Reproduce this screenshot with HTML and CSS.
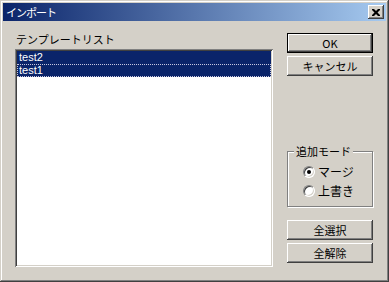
FILE: index.html
```html
<!DOCTYPE html>
<html lang="ja">
<head>
    <meta charset="UTF-8">
    <title>インポート</title>
    <link rel="stylesheet" href="styles.css">
</head>
<body>
    <div class="window">
        <div class="titlebar">
            <span class="title">インポート</span>
            <button class="close-btn" type="button">
                <svg width="8" height="7" viewBox="0 0 8 7">
                    <path d="M0 0h2l2 2 2-2h2v1l-2.5 2.5 2.5 2.5v1h-2l-2-2-2 2h-2v-1l2.5-2.5-2.5-2.5z" fill="#000"/>
                </svg>
            </button>
        </div>
        <div class="content">
            <div class="left">
                <div class="list-label">テンプレートリスト</div>
                <div class="listbox">
                    <div class="item selected">test2</div>
                    <div class="item selected focused">test1</div>
                </div>
            </div>
            <div class="right">
                <button class="btn default" type="button">OK</button>
                <button class="btn" type="button">キャンセル</button>

                <div class="group">
                    <span class="group-title">追加モード</span>
                    <label class="radio">
                        <span class="radio-mark checked"></span>マージ
                    </label>
                    <label class="radio">
                        <span class="radio-mark"></span>上書き
                    </label>
                </div>

                <button class="btn select-all" type="button">全選択</button>
                <button class="btn" type="button">全解除</button>
            </div>
        </div>
    </div>
</body>
</html>
```

FILE: styles.css
```css
body {
    margin: 0;
    padding: 0;
    background-color: #d4d0c8;
    font-family: "Noto Sans CJK JP", "Liberation Sans", sans-serif;
    font-size: 12px;
}

.window {
    width: 389px;
    height: 282px;
    box-sizing: border-box;
    padding: 3px;
    background-color: #d4d0c8;
    box-shadow: inset -1px -1px #404040, inset 1px 1px #d4d0c8,
        inset -2px -2px #808080, inset 2px 2px #fff;
}

.titlebar {
    height: 18px;
    display: flex;
    align-items: center;
    justify-content: space-between;
    padding: 0 2px 0 3px;
    background: linear-gradient(to right, #0a246a, #a6caf0);
    color: #fff;
}

.title {
    font-size: 11px;
    letter-spacing: -1px;
    line-height: 18px;
}

.close-btn {
    width: 16px;
    height: 14px;
    padding: 0;
    border: none;
    display: flex;
    align-items: center;
    justify-content: center;
    background-color: #d4d0c8;
    box-shadow: inset -1px -1px #404040, inset 1px 1px #fff,
        inset -2px -2px #808080;
}

.content {
    display: flex;
    padding: 10px 12px 0 12px;
}

.left {
    width: 258px;
}

.list-label {
    height: 16px;
    line-height: 16px;
    padding-left: 1px;
    font-size: 11px;
    color: #000;
}

.listbox {
    margin-top: 2px;
    height: 218px;
    box-sizing: border-box;
    padding: 2px;
    background-color: #fff;
    box-shadow: inset 1px 1px #808080, inset -1px -1px #fff,
        inset 2px 2px #404040, inset -2px -2px #d4d0c8;
}

.item {
    height: 13px;
    line-height: 13px;
    padding-left: 2px;
    font-family: "Liberation Sans", sans-serif;
    font-size: 11px;
    color: #000;
}

.item.selected {
    background-color: #0a246a;
    color: #fff;
}

.item.focused {
    box-sizing: border-box;
    border: 1px dotted #c8c8e0;
    padding-left: 1px;
    line-height: 11px;
}

.right {
    margin-left: 14px;
    width: 86px;
    padding-top: 2px;
    display: flex;
    flex-direction: column;
}

.btn {
    height: 20px;
    width: 86px;
    padding: 0;
    border: none;
    background-color: #d4d0c8;
    font-family: "Noto Sans CJK JP", sans-serif;
    font-size: 11px;
    color: #000;
    box-shadow: inset -1px -1px #404040, inset 1px 1px #fff,
        inset -2px -2px #808080;
}

.btn + .btn {
    margin-top: 3px;
}

.btn.default {
    box-shadow: inset 0 0 0 1px #000, inset -2px -2px #404040,
        inset 2px 2px #fff, inset -3px -3px #808080;
}

.group {
    position: relative;
    margin-top: 75px;
    height: 56px;
    box-sizing: border-box;
    border: 1px solid #808080;
    box-shadow: inset 1px 1px #fff, 1px 1px #fff;
    padding-top: 10px;
}

.group-title {
    position: absolute;
    top: -8px;
    left: 6px;
    padding: 0 2px;
    line-height: 14px;
    font-size: 11px;
    background-color: #d4d0c8;
}

.radio {
    display: flex;
    align-items: center;
    height: 19px;
    padding-left: 15px;
    font-size: 12px;
}

.radio-mark {
    width: 12px;
    height: 12px;
    box-sizing: border-box;
    margin-right: 3px;
    border-radius: 50%;
    background-color: #fff;
    border-top: 1px solid #808080;
    border-left: 1px solid #808080;
    border-right: 1px solid #fff;
    border-bottom: 1px solid #fff;
    box-shadow: inset 1px 1px #404040, inset -1px -1px #d4d0c8;
    position: relative;
}

.radio-mark.checked::after {
    content: "";
    position: absolute;
    left: 3px;
    top: 3px;
    width: 4px;
    height: 4px;
    border-radius: 50%;
    background-color: #000;
}

.select-all {
    margin-top: 13px;
}
```
